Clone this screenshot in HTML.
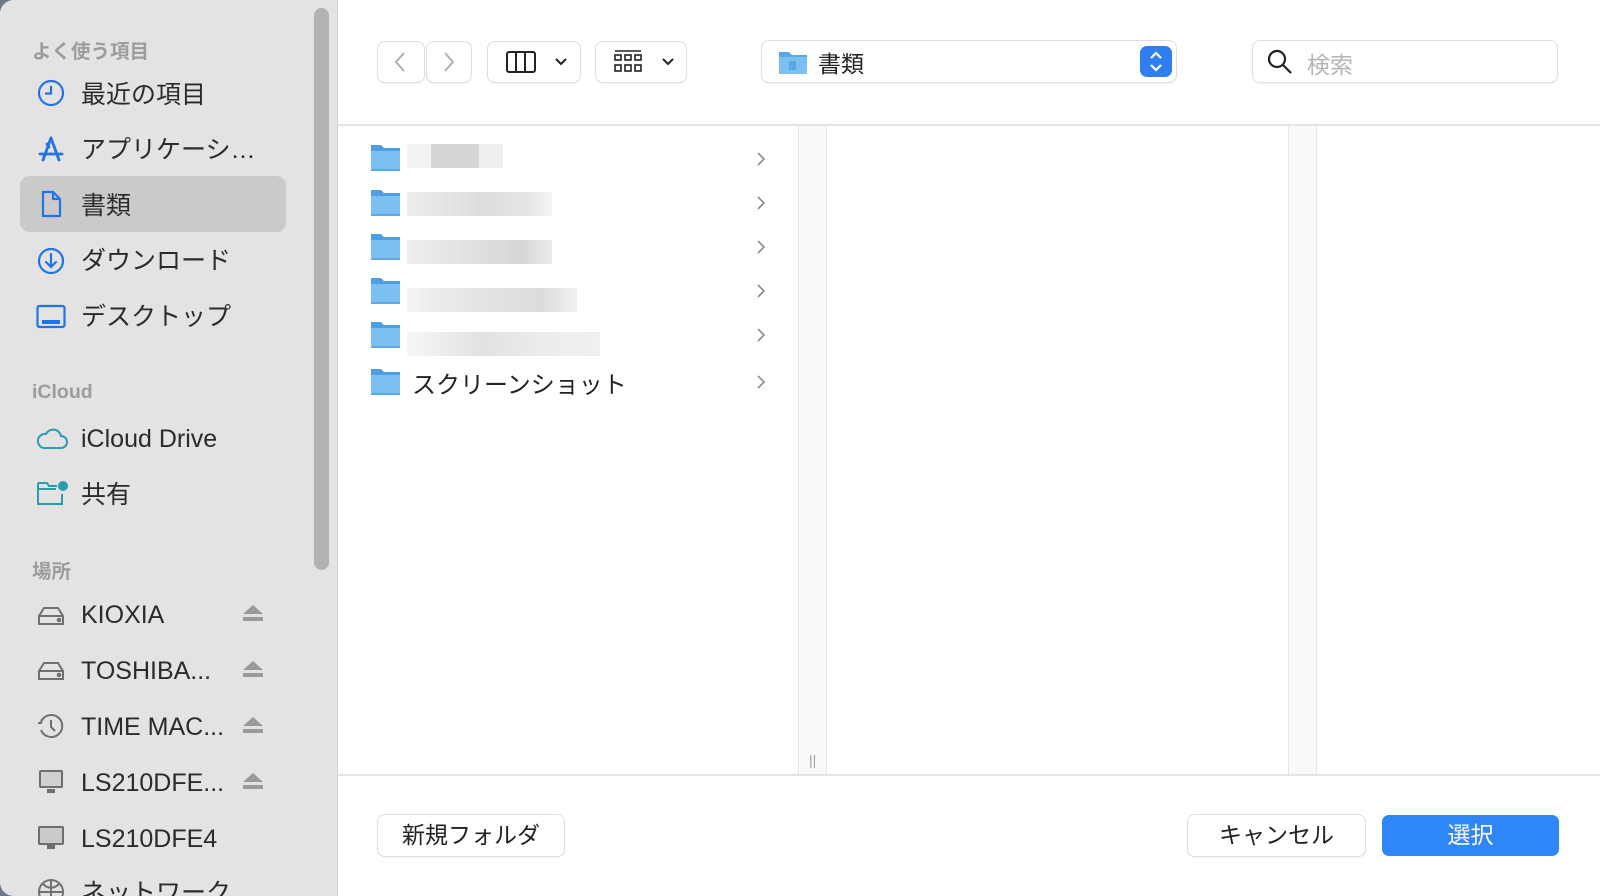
<!DOCTYPE html>
<html><head><meta charset="utf-8"><style>
*{margin:0;padding:0;box-sizing:border-box}
body{width:1600px;height:896px;overflow:hidden;background:#6d7a8c;font-family:"Liberation Sans","Noto Sans CJK JP",sans-serif;position:relative}
.win{position:absolute;left:0;top:0;width:1600px;height:896px;background:#fff;border-radius:14px 0 0 14px;overflow:hidden}
.side{position:absolute;left:0;top:0;width:338px;height:896px;background:#e4e2e2;border-right:1px solid #d4d2d2}
.sb{position:absolute;left:314px;top:8px;width:15px;height:562px;border-radius:8px;background:#b3b1b1}
.h{position:absolute;left:32px;font-size:19.5px;color:#9d9b9b;font-weight:bold}
.it{position:absolute;left:81px;font-size:25px;color:#2b2b2b;line-height:30px;margin-top:2px}
.ic{position:absolute;left:36px;width:30px;height:30px}
.sel{position:absolute;left:20px;top:176px;width:266px;height:56px;border-radius:10px;background:#cbc9c9}
.ej{position:absolute;left:242px;width:22px}
.btn{position:absolute;background:#fff;border-radius:7px;box-shadow:0 0 0 1px #dedede,0 1px 2px rgba(0,0,0,.12)}
.sep{position:absolute;background:#e4e4e4}
.row{position:absolute;left:371px;height:30px}
.blur{position:absolute;left:407px;height:24px}
.chev{position:absolute;left:756px;width:10px;height:16px}
.bb{position:absolute;font-size:23px;text-align:center;line-height:41px;color:#222}
</style></head><body><div class="win">
<div class="side">
<div class="sb"></div>
<div class="sel"></div>
<div class="h" style="top:35px">よく使う項目</div>
<svg class="ic" style="top:78px" viewBox="0 0 30 30" fill="none" stroke="#1f74e6" stroke-width="2.2"><circle cx="15" cy="15" r="12"/><path d="M15 8v7.5h-6"/></svg>
<div class="it" style="top:78px">最近の項目</div>
<svg class="ic" style="top:134px" viewBox="0 0 30 30" fill="none" stroke="#1f74e6" stroke-width="2.8" stroke-linecap="round"><path d="M15 4L7 26M15 4l8 22M4 20h22M11 10l2 3"/></svg>
<div class="it" style="top:133px">アプリケーシ…</div>
<svg class="ic" style="top:189px" viewBox="0 0 30 30" fill="none" stroke="#1f74e6" stroke-width="2.2" stroke-linejoin="round"><path d="M7 3h10l7 7v17H7zM17 3v7h7"/></svg>
<div class="it" style="top:189px">書類</div>
<svg class="ic" style="top:246px" viewBox="0 0 30 30" fill="none" stroke="#1f74e6" stroke-width="2.2" stroke-linecap="round"><circle cx="15" cy="15" r="12"/><path d="M15 8v13M10 16l5 5 5-5"/></svg>
<div class="it" style="top:244px">ダウンロード</div>
<svg class="ic" style="top:302px" viewBox="0 0 30 30" fill="none" stroke="#1f74e6" stroke-width="2.2"><rect x="1.5" y="4" width="27" height="21" rx="2"/><path d="M6 20h18" stroke-width="4"/></svg>
<div class="it" style="top:300px">デスクトップ</div>
<div class="h" style="top:381px">iCloud</div>
<svg class="ic" style="top:424px;width:34px;left:35px" viewBox="0 0 34 30" fill="none" stroke="#2a9dae" stroke-width="2"><path d="M9 24h17a6 6 0 0 0 0-12 8 8 0 0 0-15-2 7 7 0 0 0-2 14z"/></svg>
<div class="it" style="top:422px">iCloud Drive</div>
<svg class="ic" style="top:478px;width:34px" viewBox="0 0 34 30" fill="none" stroke="#2a9dae" stroke-width="2"><path d="M2 5h9l2 3h8M2 5v21h24v-10M2 11h18"/><circle cx="27" cy="8" r="5" fill="#2a9dae" stroke="none"/></svg>
<div class="it" style="top:478px">共有</div>
<div class="h" style="top:555px">場所</div>
<svg class="ic" style="top:600px" viewBox="0 0 30 30" fill="none" stroke="#707070" stroke-width="2"><path d="M3 16L8 8h14l5 8v8H3zM3 16h24"/><circle cx="23" cy="20" r="1.3" fill="#707070"/></svg>
<div class="it" style="top:598px">KIOXIA</div>
<svg class="ic" style="top:655px" viewBox="0 0 30 30" fill="none" stroke="#707070" stroke-width="2"><path d="M3 16L8 8h14l5 8v8H3zM3 16h24"/><circle cx="23" cy="20" r="1.3" fill="#707070"/></svg>
<div class="it" style="top:654px">TOSHIBA...</div>
<svg class="ic" style="top:711px" viewBox="0 0 30 30" fill="none" stroke="#707070" stroke-width="2"><path d="M5 11a11 11 0 1 1 0 8M2 12l3 0 1-4"/><path d="M15 9v7l4 4"/></svg>
<div class="it" style="top:710px">TIME MAC...</div>
<svg class="ic" style="top:767px" viewBox="0 0 30 30"><rect x="3" y="3" width="24" height="18" rx="2" fill="#6e6e6e"/><rect x="5" y="5" width="20" height="14" fill="#d0d0d0"/><rect x="11" y="22" width="8" height="4" fill="#6e6e6e"/></svg>
<div class="it" style="top:766px">LS210DFE...</div>
<svg class="ic" style="top:823px" viewBox="0 0 30 30"><rect x="2" y="3" width="26" height="19" rx="2" fill="#6e6e6e"/><rect x="4" y="5" width="22" height="15" fill="#cacaca"/><rect x="11" y="22" width="8" height="4" fill="#6e6e6e"/></svg>
<div class="it" style="top:822px">LS210DFE4</div>
<svg class="ic" style="top:877px" viewBox="0 0 30 30" fill="none" stroke="#707070" stroke-width="2"><circle cx="15" cy="15" r="12"/><path d="M3 15h24M15 3v24M7 7c5 5 11 5 16 0"/></svg>
<div class="it" style="top:876px">ネットワーク</div>
<svg class="ej" style="top:603px" viewBox="0 0 22 20" fill="#9a9a9a"><path d="M11 2l10 9H1z"/><rect x="1" y="14" width="20" height="4"/></svg>
<svg class="ej" style="top:659px" viewBox="0 0 22 20" fill="#9a9a9a"><path d="M11 2l10 9H1z"/><rect x="1" y="14" width="20" height="4"/></svg>
<svg class="ej" style="top:715px" viewBox="0 0 22 20" fill="#9a9a9a"><path d="M11 2l10 9H1z"/><rect x="1" y="14" width="20" height="4"/></svg>
<svg class="ej" style="top:771px" viewBox="0 0 22 20" fill="#9a9a9a"><path d="M11 2l10 9H1z"/><rect x="1" y="14" width="20" height="4"/></svg>
</div>

<div class="btn" style="left:378px;top:42px;width:46px;height:40px"><svg style="position:absolute;left:15px;top:10px" width="14" height="20" viewBox="0 0 14 20" fill="none" stroke="#b0b0b0" stroke-width="2"><path d="M11 1L3 10l8 9"/></svg></div>
<div class="btn" style="left:427px;top:42px;width:44px;height:40px"><svg style="position:absolute;left:15px;top:10px" width="14" height="20" viewBox="0 0 14 20" fill="none" stroke="#b0b0b0" stroke-width="2"><path d="M3 1l8 9-8 9"/></svg></div>
<div class="btn" style="left:488px;top:42px;width:92px;height:40px"><svg style="position:absolute;left:18px;top:9px" width="64" height="22" viewBox="0 0 64 22" fill="none" stroke="#222" stroke-width="2"><rect x="1" y="1" width="28" height="20" rx="2"/><path d="M10 1v20M19 1v20M50 8l5 5 5-5"/></svg></div>
<div class="btn" style="left:596px;top:42px;width:90px;height:40px"><svg style="position:absolute;left:18px;top:8px" width="64" height="24" viewBox="0 0 64 24" fill="none" stroke="#222" stroke-width="1.6"><path d="M1 1h26"/><rect x="1" y="5" width="6" height="5"/><rect x="11" y="5" width="6" height="5"/><rect x="21" y="5" width="6" height="5"/><rect x="1" y="15" width="6" height="6"/><rect x="11" y="15" width="6" height="6"/><rect x="21" y="15" width="6" height="6"/><path d="M49 9l5 5 5-5" stroke-width="2"/></svg></div>
<div class="btn" style="left:762px;top:41px;width:414px;height:41px">
<svg style="position:absolute;left:16px;top:8px" width="30" height="26" viewBox="0 0 30 26"><path d="M1 3h10l3 3h15v19H1z" fill="#5aa7e8"/><rect x="1" y="8" width="28" height="17" fill="#7cc0f2"/><rect x="11" y="12" width="7" height="9" fill="#5aa7e8"/></svg>
<div style="position:absolute;left:56px;top:4px;font-size:23px;color:#222">書類</div>
<div style="position:absolute;right:4px;top:5px;width:32px;height:31px;border-radius:7px;background:#2f7ff0"><svg width="32" height="31" viewBox="0 0 32 31" fill="none" stroke="#fff" stroke-width="2.2"><path d="M11 12l5-5 5 5M11 19l5 5 5-5"/></svg></div>
</div>
<div class="btn" style="left:1253px;top:41px;width:304px;height:41px">
<svg style="position:absolute;left:14px;top:8px" width="26" height="26" viewBox="0 0 26 26" fill="none" stroke="#222" stroke-width="2.2"><circle cx="10" cy="10" r="8"/><path d="M16 16l8 8"/></svg>
<div style="position:absolute;left:54px;top:5px;font-size:23px;color:#b5b5b5">検索</div>
</div>
<div class="sep" style="left:338px;top:124px;width:1262px;height:2px"></div>

<div style="position:absolute;left:798px;top:126px;width:29px;height:649px;background:#f9f9f9;border-left:1px solid #e6e6e6;border-right:1px solid #e6e6e6"></div>
<div style="position:absolute;left:809px;top:752px;font-size:14px;color:#a0a0a0">||</div>
<div style="position:absolute;left:1288px;top:126px;width:29px;height:649px;background:#f9f9f9;border-left:1px solid #e6e6e6;border-right:1px solid #e6e6e6"></div>

<svg width="0" height="0" style="position:absolute"><defs><g id="f"><path d="M0 2h10l3 3h16v23H0z" fill="#4f9fe3"/><rect x="0" y="8" width="29" height="20" rx="1" fill="#7cc0f2"/><rect x="0" y="26" width="29" height="2" fill="#5ea8e6"/></g><path id="c" d="M2 2l6 6-6 6" fill="none" stroke="#8a8a8a" stroke-width="1.6"/></defs></svg>
<svg class="row" style="top:143px" width="30" height="30"><use href="#f"/></svg>
<svg class="row" style="top:188px" width="30" height="30"><use href="#f"/></svg>
<svg class="row" style="top:232px" width="30" height="30"><use href="#f"/></svg>
<svg class="row" style="top:276px" width="30" height="30"><use href="#f"/></svg>
<svg class="row" style="top:320px" width="30" height="30"><use href="#f"/></svg>
<svg class="row" style="top:367px" width="30" height="30"><use href="#f"/></svg>
<div class="blur" style="top:144px;width:96px;background:linear-gradient(90deg,#f3f3f3 0 25%,#d6d6d6 25% 75%,#efefef 75%)"></div>
<div class="blur" style="top:192px;width:145px;background:linear-gradient(90deg,#eee,#dcdcdc 50%,#e6e6e6 85%,#f6f6f6)"></div>
<div class="blur" style="top:240px;width:145px;background:linear-gradient(90deg,#eee,#dcdcdc 60%,#d6d6d6 80%,#ececec)"></div>
<div class="blur" style="top:288px;width:170px;background:linear-gradient(90deg,#f4f4f4,#e4e4e4 40%,#dcdcdc 80%,#f2f2f2)"></div>
<div class="blur" style="top:332px;width:193px;background:linear-gradient(90deg,#f6f6f6,#e2e2e2 40%,#ececec 70%,#f0f0f0)"></div>
<div style="position:absolute;left:412px;top:365px;font-size:24px;color:#222">スクリーンショット</div>
<svg class="chev" style="top:151px"><use href="#c"/></svg>
<svg class="chev" style="top:195px"><use href="#c"/></svg>
<svg class="chev" style="top:239px"><use href="#c"/></svg>
<svg class="chev" style="top:283px"><use href="#c"/></svg>
<svg class="chev" style="top:327px"><use href="#c"/></svg>
<svg class="chev" style="top:374px"><use href="#c"/></svg>

<div class="sep" style="left:338px;top:774px;width:1262px;height:2px"></div>
<div class="btn bb" style="left:378px;top:815px;width:186px;height:41px">新規フォルダ</div>
<div class="btn bb" style="left:1188px;top:815px;width:177px;height:41px">キャンセル</div>
<div class="bb" style="left:1382px;top:815px;width:177px;height:41px;background:#2f86f6;border-radius:7px;color:#fff">選択</div>
</div></body></html>
